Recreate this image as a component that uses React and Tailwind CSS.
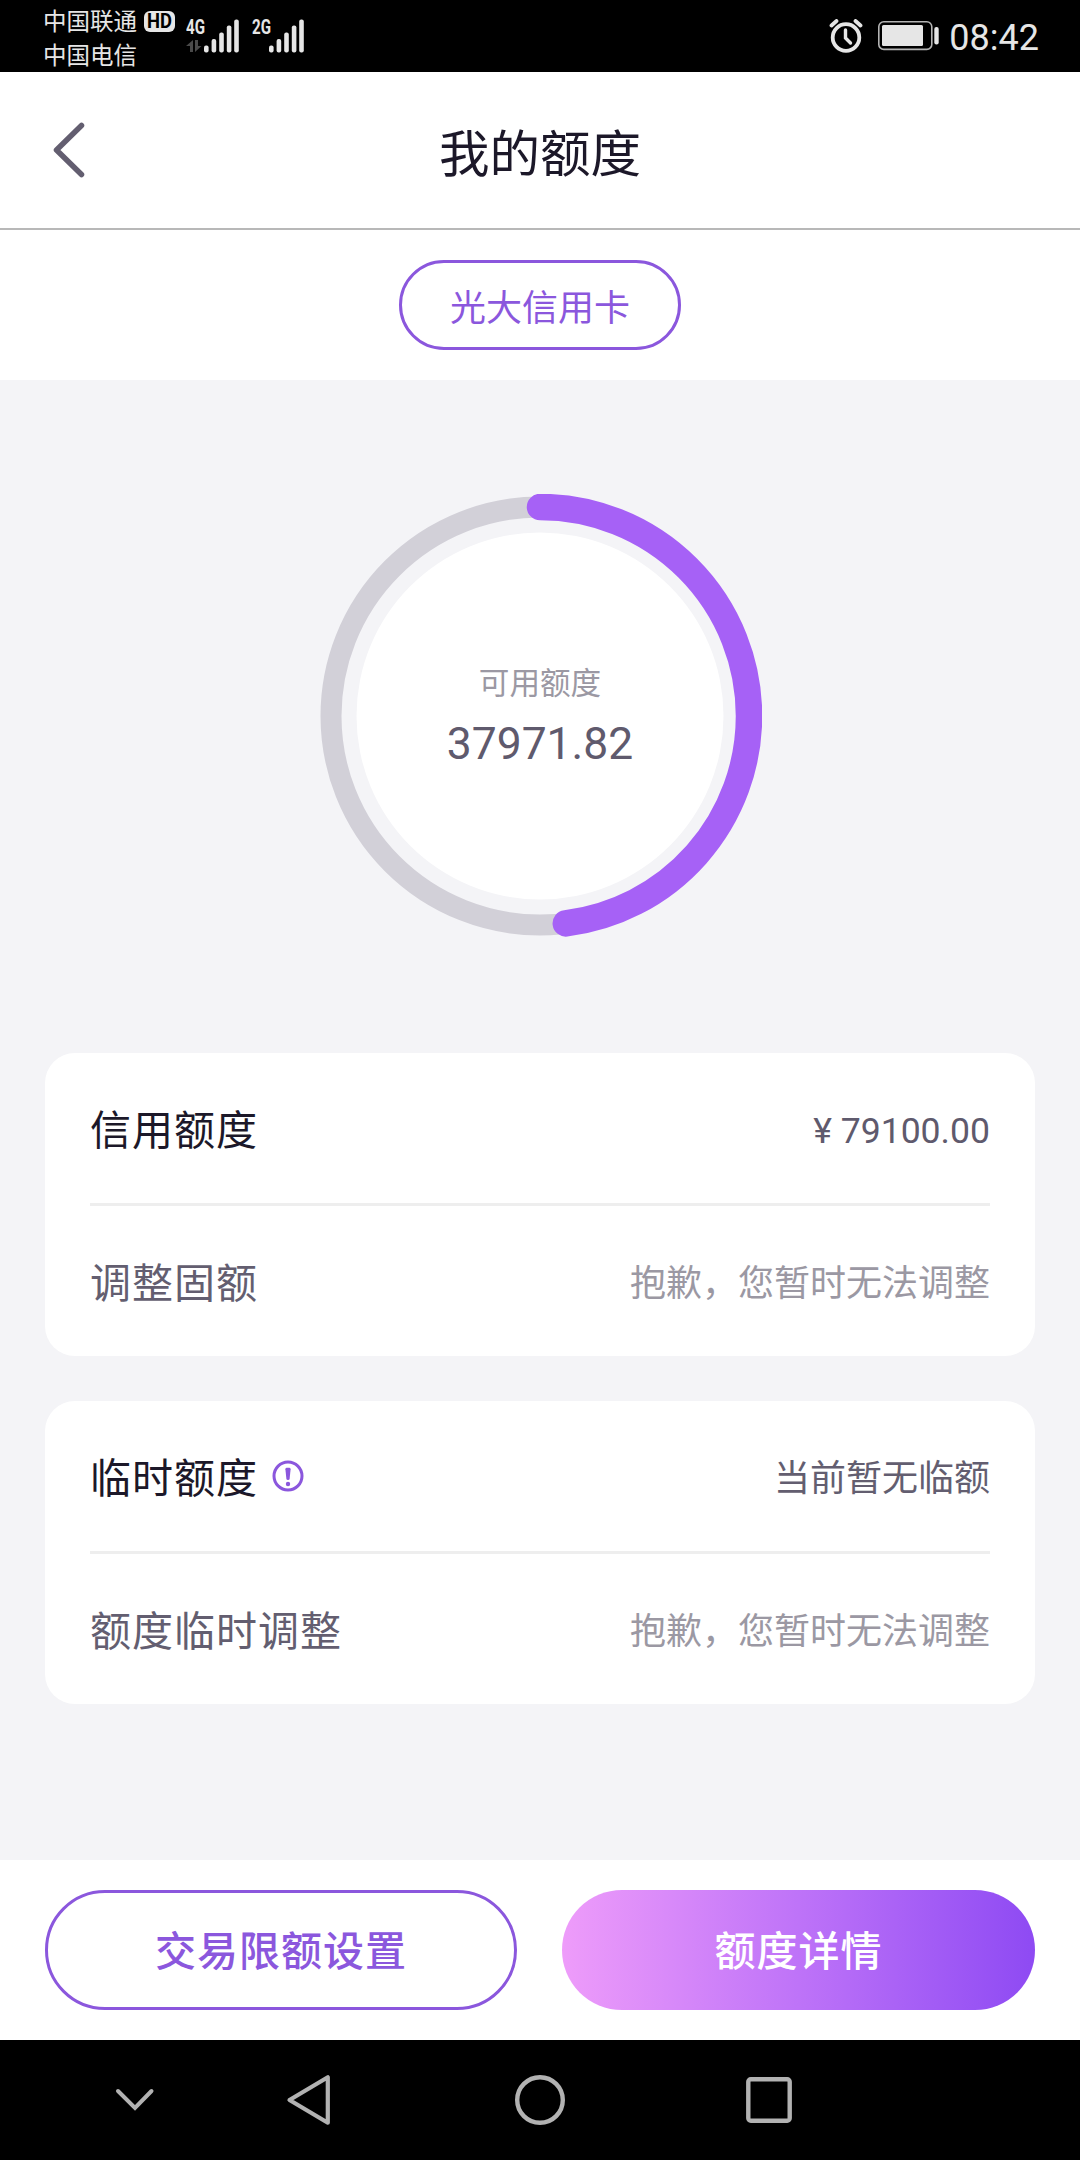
import { useState } from "react";

const CREDIT_LIMIT = 79100;
const AVAILABLE = 37971.82;

const SignalBars = () => (
  <svg width="36" height="34" viewBox="0 0 36 34" fill="#e6e6e6">
    <rect x="0" y="26.5" width="4.6" height="7" rx="2" />
    <rect x="7.6" y="20" width="4.6" height="13.5" rx="2" />
    <rect x="15.2" y="13.5" width="4.6" height="20" rx="2" />
    <rect x="22.8" y="6.5" width="4.6" height="27" rx="2" />
    <rect x="30.2" y="0.5" width="4.6" height="33" rx="2" />
  </svg>
);

const StatusBar = () => (
  <div className="flex h-[72px] items-center justify-between bg-black pl-[43px] pr-[41px] text-[#e6e6e6]">
    <div className="flex items-center">
      {/* Carriers */}
      <div className="flex flex-col">
        <div className="flex h-[34px] items-center">
          <span className="pt-[6px] text-[23.5px] leading-[34px]">中国联通</span>
          <span className="ml-[7px] mt-[4px] flex h-[21px] w-[31px] items-center justify-center rounded-[6px] bg-[#e6e6e6] text-black">
            <span className="scale-x-[0.92] text-[20px] font-bold leading-[21px]">HD</span>
          </span>
        </div>
        <span className="h-[34px] pt-[3px] text-[23.5px] leading-[34px]">中国电信</span>
      </div>

      {/* Signal of both SIM cards */}
      <div className="ml-[11px] flex h-[34px] items-start">
        <div className="flex w-[18px] flex-col">
          <span className="origin-left scale-x-[0.72] whitespace-nowrap text-[21px] font-bold leading-[16px]">
            4G
          </span>
          <svg className="mt-[5px]" width="16" height="12" viewBox="0 0 16 12" fill="#4a4a4a">
            <path d="M7 0v12H4V6H0z" />
            <path d="M9 0v12l6.5-6H12V0z" />
          </svg>
        </div>
        <SignalBars />
        <span className="ml-[12px] w-[17px] origin-left scale-x-[0.72] whitespace-nowrap text-[21px] font-bold leading-[16px]">
          2G
        </span>
        <SignalBars />
      </div>
    </div>

    <div className="flex items-center">
      {/* Alarm */}
      <svg width="34" height="34" viewBox="0 0 34 34" fill="none" stroke="#e6e6e6" strokeWidth="3.8" strokeLinecap="round">
        <circle cx="17" cy="18.5" r="13.3" />
        <path d="M16.5 11v8l5 5" strokeWidth="3.4" />
        <path d="M2.5 6.5l5-4.5M31.5 6.5l-5-4.5" />
      </svg>
      {/* Battery */}
      <svg className="ml-[15px]" width="62" height="30" viewBox="0 0 62 30">
        <rect x="0.8" y="0.8" width="53" height="27.6" rx="5" fill="none" stroke="#b4b4b4" strokeWidth="1.6" />
        <rect x="4" y="4" width="41" height="21" rx="1.5" fill="#e6e6e6" />
        <rect x="56.3" y="6" width="4.4" height="17.5" rx="2" fill="#e6e6e6" />
      </svg>
      <span className="ml-[9px] pt-[4px] text-[36px] leading-none">08:42</span>
    </div>
  </div>
);

const Gauge = ({ value, total }) => {
  const radius = 209;
  const length = 2 * Math.PI * radius;
  const filled = length * (value / total);

  return (
    <div className="grid h-[444px] w-[444px] place-items-center">
      <svg
        className="col-start-1 row-start-1"
        width="444"
        height="444"
        viewBox="0 0 444 444"
        fill="none"
      >
        <circle cx="222" cy="222" r={radius} stroke="#d2d0d8" strokeWidth="21" />
        <circle cx="222" cy="222" r="183.5" fill="#ffffff" />
        <circle
          cx="222"
          cy="222"
          r={radius}
          stroke="#a661f6"
          strokeWidth="26.5"
          strokeLinecap="round"
          strokeDasharray={`${filled} ${length}`}
          transform="rotate(-90 222 222)"
        />
      </svg>
      <div className="col-start-1 row-start-1 flex flex-col items-center">
        <span className="text-[30.6px] leading-[44px] text-[#9b98a3]">可用额度</span>
        <span className="mt-[12px] text-[44.4px] leading-[52px] text-[#5f5a6d]">{value}</span>
      </div>
    </div>
  );
};

const Row = ({ label, labelClass, value, valueClass, children }) => (
  <div className="flex h-[150px] items-center justify-between pt-[5px]">
    <div className="flex items-center">
      <span className={`text-[41px] leading-[60px] tracking-[1px] ${labelClass}`}>{label}</span>
      {children}
    </div>
    <span className={`leading-[52px] ${valueClass}`}>{value}</span>
  </div>
);

const Card = ({ children }) => (
  <section className="rounded-[30px] bg-white px-[45px]">{children}</section>
);

const Divider = () => <div className="h-[3px] bg-[#eeeeee]" />;

const InfoIcon = () => (
  <svg className="mb-[6px] ml-[14px]" width="32" height="32" viewBox="0 0 32 32">
    <circle cx="16" cy="16" r="14" fill="none" stroke="#8b57dd" strokeWidth="3" />
    <path d="M13.4 9.2q0-1.4 1.4-1.4h2.4q1.4 0 1.4 1.4l-1 9.8q-.2 1-1.6 1t-1.6-1z" fill="#8b57dd" />
    <circle cx="16" cy="24" r="2.2" fill="#8b57dd" />
  </svg>
);

const NavBar = () => (
  <nav className="flex h-[120px] items-center bg-black pl-[115px]">
    <svg width="40" height="24" viewBox="0 0 40 24" fill="none" stroke="#b2b2b2" strokeWidth="4" strokeLinecap="round">
      <path d="M3 3l17 17L36.5 3" />
    </svg>
    <svg className="ml-[131px]" width="46" height="52" viewBox="0 0 46 52" fill="none" stroke="#b2b2b2" strokeWidth="4.2" strokeLinejoin="round">
      <path d="M41.8 3.3v45.4L3.5 26z" />
    </svg>
    <svg className="ml-[182px]" width="52" height="52" viewBox="0 0 52 52" fill="none" stroke="#b2b2b2" strokeWidth="4.4">
      <circle cx="26" cy="26" r="22.8" />
    </svg>
    <svg className="ml-[179px]" width="48" height="48" viewBox="0 0 48 48" fill="none" stroke="#b2b2b2" strokeWidth="4.4">
      <rect x="3.3" y="3.3" width="41.4" height="41.4" rx="2.5" />
    </svg>
  </nav>
);

const App = () => {
  const [card] = useState("光大信用卡");

  return (
    <div className="flex h-[2160px] w-[1080px] flex-col overflow-hidden bg-[#f4f4f7] font-[Roboto,'Noto_Sans_CJK_SC',sans-serif]">
      <StatusBar />

      {/* Header */}
      <header className="grid h-[158px] grid-cols-[1fr_auto_1fr] items-center border-b-2 border-[#b8b8b8] bg-white px-[52px]">
        <button className="justify-self-start">
          <svg width="34" height="58" viewBox="0 0 34 58" fill="none" stroke="#635e70" strokeWidth="5.5" strokeLinecap="round" strokeLinejoin="round">
            <path d="M29.5 4.5L4.5 29l25 24.5" />
          </svg>
        </button>
        <h1 className="mt-[9px] text-[50.5px] leading-[74px] text-[#1c1829]">我的额度</h1>
      </header>

      {/* Card selector */}
      <div className="flex h-[150px] items-center justify-center bg-white">
        <button className="h-[90px] w-[282px] rounded-full border-3 border-[#8b57dd] pt-[7px] text-[36px] leading-[52px] text-[#8b57dd]">
          {card}
        </button>
      </div>

      <main className="flex flex-1 flex-col px-[45px]">
        <div className="mb-[115px] mt-[114px] flex justify-center">
          <Gauge value={AVAILABLE} total={CREDIT_LIMIT} />
        </div>

        <div className="flex flex-col gap-[45px]">
          <Card>
            <Row
              label="信用额度"
              labelClass="text-[#1c1829]"
              value={`¥ ${CREDIT_LIMIT.toFixed(2)}`}
              valueClass="text-[35.6px] text-[#5f5a6d]"
            />
            <Divider />
            <Row
              label="调整固额"
              labelClass="text-[#635e70]"
              value="抱歉，您暂时无法调整"
              valueClass="text-[36px] text-[#9b98a3]"
            />
          </Card>

          <Card>
            <Row
              label="临时额度"
              labelClass="text-[#1c1829]"
              value="当前暂无临额"
              valueClass="text-[36px] text-[#635e70]"
            >
              <InfoIcon />
            </Row>
            <Divider />
            <Row
              label="额度临时调整"
              labelClass="text-[#635e70]"
              value="抱歉，您暂时无法调整"
              valueClass="text-[36px] text-[#9b98a3]"
            />
          </Card>
        </div>
      </main>

      {/* Actions */}
      <footer className="flex h-[180px] items-center gap-[45px] bg-white px-[45px]">
        <button className="h-[120px] w-[472px] rounded-full border-3 border-[#8b57dd] pt-[6px] text-[41px] font-medium tracking-[1px] text-[#8b57dd]">
          交易限额设置
        </button>
        <button className="h-[120px] flex-1 rounded-full bg-[linear-gradient(90deg,#ee9cfa,#be73f8_50%,#8e4af3)] pt-[6px] text-[41px] font-medium tracking-[1px] text-white">
          额度详情
        </button>
      </footer>

      <NavBar />
    </div>
  );
};

export default App;
